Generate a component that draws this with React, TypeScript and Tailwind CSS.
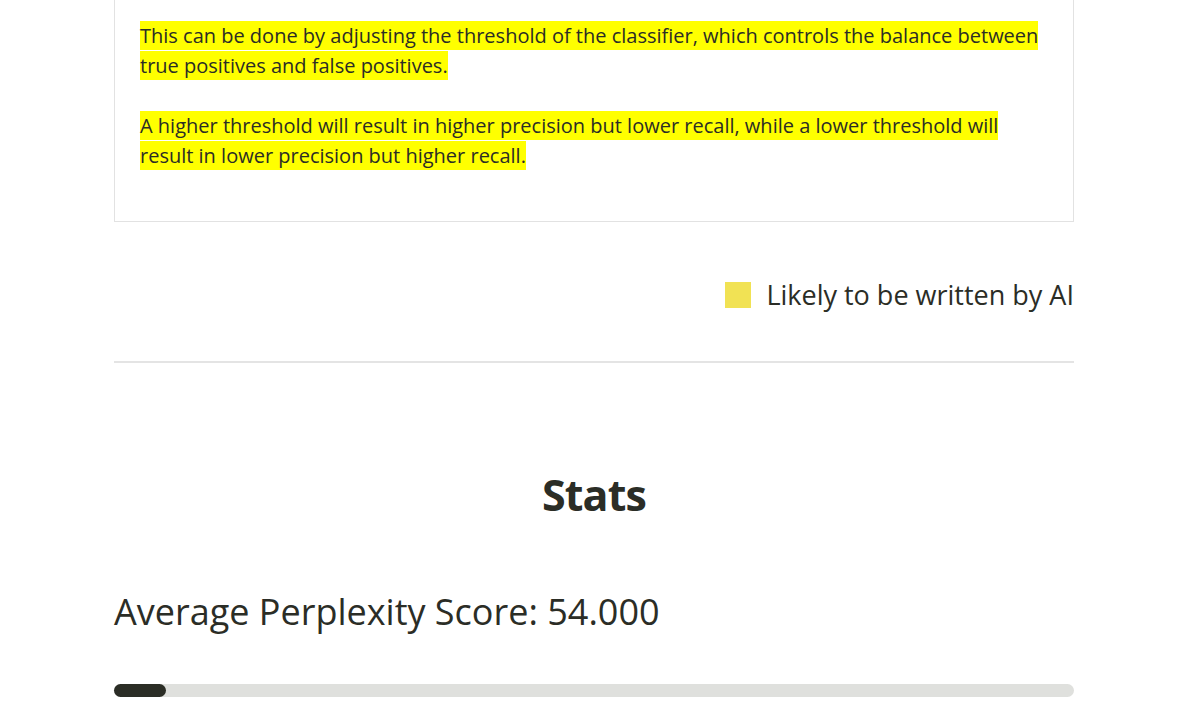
const paragraphs = [
    [
        'This can be done by adjusting the threshold of the classifier, which controls the balance between',
        'true positives and false positives.',
    ],
    [
        'A higher threshold will result in higher precision but lower recall, while a lower threshold will',
        'result in lower precision but higher recall.',
    ],
];

const avgPerplexity = 54;

export default function App() {
    return (
        <div className="min-h-screen bg-white font-['Open_Sans','Noto_Sans',sans-serif] text-[#2b2d26]">
            <div className="ml-[114px] w-[960px]">
                <div className="border border-t-0 border-[#e2e2e2] px-[25px] pt-[21px] pb-[26px]">
                    {paragraphs.map((lines, i) => (
                        <p key={i} className="mb-[30px] text-[20px] leading-[30px] last:mb-[24px]">
                            {lines.map((line, j) => (
                                <span key={j}>
                                    <span className="bg-[#ffff00] py-[1px]">{line}</span>
                                    {j < lines.length - 1 && <br />}
                                </span>
                            ))}
                        </p>
                    ))}
                </div>

                <div className="mt-[55px] flex items-center justify-end gap-[15px]">
                    <span className="h-[26px] w-[26px] bg-[#f1e254]" />
                    <span className="text-[27px] leading-[36px]">Likely to be written by AI</span>
                </div>

                <hr className="mt-[48px] border-t-2 border-[#e4e4e4]" />

                <h2 className="mt-[102px] text-center text-[43px] font-bold leading-[60px] tracking-[-0.02em]">Stats</h2>

                <div className="mt-[63px] text-[36px] leading-[48px]">
                    Average Perplexity Score: {avgPerplexity.toFixed(3)}
                </div>

                <div className="mt-[48px] h-[13px] w-full rounded-full bg-[#dfe0dd]">
                    <div className="h-full rounded-full bg-[#2b2d26]" style={{ width: `${(avgPerplexity / 1000) * 100}%` }} />
                </div>
            </div>
        </div>
    );
}
